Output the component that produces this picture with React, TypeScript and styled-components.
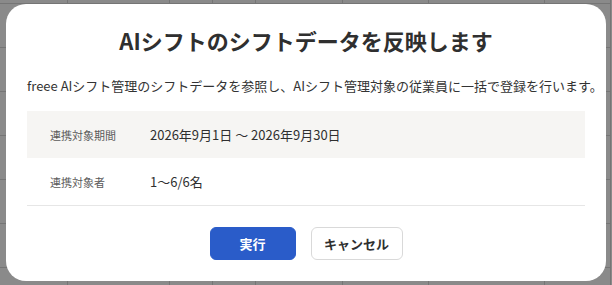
import styled, { createGlobalStyle } from "styled-components";

const GlobalStyle = createGlobalStyle`
  html, body {
    margin: 0;
    padding: 0;
    width: 612px;
    height: 285px;
    overflow: hidden;
    font-family: "Noto Sans CJK JP", "Noto Sans", sans-serif;
  }
`;

const Page = styled.div`
  position: relative;
  width: 612px;
  height: 285px;
  background: #ffffff;
  overflow: hidden;
`;

const BackTable = styled.div`
  display: grid;
  grid-template-columns: 68px 102px 43px 43px 87px 86px 116px 66px;
  grid-auto-rows: 44px;
  margin-top: -40px;
`;

const BackCell = styled.div`
  border-right: 1px solid #d8d8d8;
  border-bottom: 1px solid #d8d8d8;
`;

const Overlay = styled.div`
  position: absolute;
  inset: 0;
  background: rgba(0, 0, 0, 0.46);
`;

const Modal = styled.div`
  position: absolute;
  left: 6px;
  top: 4px;
  width: 600px;
  height: 277px;
  box-sizing: border-box;
  padding: 20px 21px 0;
  background: #ffffff;
  border-radius: 20px;
  display: flex;
  flex-direction: column;
`;

const Title = styled.h2`
  margin: 0;
  font-size: 22px;
  line-height: 32px;
  font-weight: 700;
  color: #2f2f2f;
  text-align: center;
`;

const Description = styled.p`
  margin: 20px 0 0;
  font-size: 13px;
  line-height: 20px;
  color: #333333;
  white-space: nowrap;
`;

const InfoTable = styled.div`
  margin-top: 15px;
  display: flex;
  flex-direction: column;
  border-bottom: 1px solid #e6e6e6;
`;

const InfoRow = styled.div<{ $shaded?: boolean }>`
  display: flex;
  align-items: center;
  height: 47px;
  padding-left: 23px;
  background: ${(p) => (p.$shaded ? "#f6f5f3" : "#ffffff")};
`;

const Label = styled.div`
  width: 100px;
  font-size: 11px;
  color: #5a5a5a;
`;

const Value = styled.div`
  font-size: 13px;
  color: #2f2f2f;
`;

const Actions = styled.div`
  margin-top: 21px;
  display: flex;
  justify-content: center;
  gap: 15px;
`;

const Button = styled.button<{ $primary?: boolean }>`
  height: 33px;
  box-sizing: border-box;
  padding: 0;
  border-radius: 6px;
  font-family: inherit;
  font-size: 13px;
  font-weight: 700;
  cursor: pointer;
  border: 1px solid ${(p) => (p.$primary ? "#2a5cc9" : "#d9d9d9")};
  background: ${(p) => (p.$primary ? "#2a5cc9" : "#ffffff")};
  color: ${(p) => (p.$primary ? "#ffffff" : "#2f2f2f")};
`;

const PrimaryButton = styled(Button)`
  width: 86px;
`;

const CancelButton = styled(Button)`
  width: 92px;
`;

export default function App() {
  const cells = Array.from({ length: 8 * 9 });

  return (
    <Page>
      <GlobalStyle />
      <BackTable>
        {cells.map((_, i) => (
          <BackCell key={i} />
        ))}
      </BackTable>
      <Overlay />
      <Modal>
        <Title>AIシフトのシフトデータを反映します</Title>
        <Description>
          freee AIシフト管理のシフトデータを参照し、AIシフト管理対象の従業員に一括で登録を行います。
        </Description>
        <InfoTable>
          <InfoRow $shaded>
            <Label>連携対象期間</Label>
            <Value>2026年9月1日 〜 2026年9月30日</Value>
          </InfoRow>
          <InfoRow>
            <Label>連携対象者</Label>
            <Value>1〜6/6名</Value>
          </InfoRow>
        </InfoTable>
        <Actions>
          <PrimaryButton $primary>実行</PrimaryButton>
          <CancelButton>キャンセル</CancelButton>
        </Actions>
      </Modal>
    </Page>
  );
}
